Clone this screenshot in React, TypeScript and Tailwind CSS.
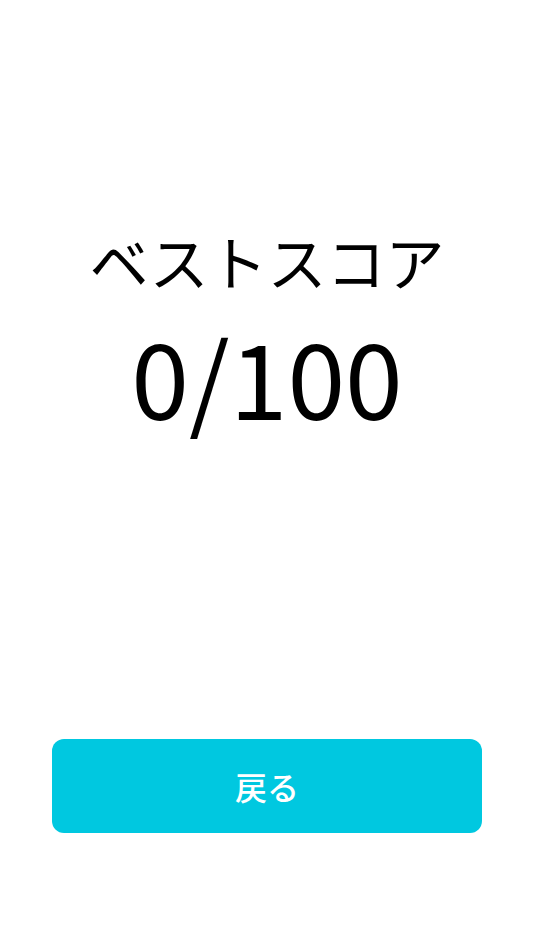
export default function App() {
  return (
    <div
      className="flex h-[950px] w-full flex-col items-center bg-white"
      style={{ fontFamily: '"Noto Sans CJK JP", "Noto Sans", sans-serif' }}
    >
      {/* Score */}
      <div className="flex flex-1 flex-col items-center pt-[231px]">
        <h1 className="text-[59px] font-normal leading-none text-black">ベストスコア</h1>
        <p className="mt-[33px] text-[104px] font-normal leading-none text-black">0/100</p>
      </div>

      {/* Back button */}
      <div className="w-full px-[52px] pb-[117px]">
        <button className="flex h-[94px] w-full items-center justify-center rounded-xl bg-[#00c8e0] text-[32px] font-medium text-white">
          戻る
        </button>
      </div>
    </div>
  );
}
